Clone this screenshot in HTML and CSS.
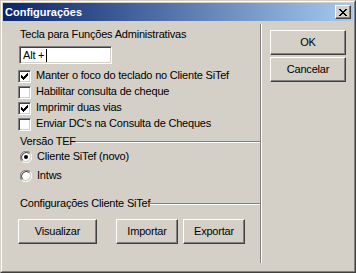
FILE: index.html
```
<!DOCTYPE html>
<html lang="pt">
<head>
<meta charset="utf-8">
<title>Configurações</title>
<link rel="stylesheet" href="styles.css">
</head>
<body>
<div class="window">
  <div class="frame">
    <div class="titlebar">
      <span class="title">Configurações</span>
      <span class="close">
        <svg width="8" height="7" viewBox="0 0 8 7" shape-rendering="crispEdges">
          <path d="M0 0h2v1h-2zM6 0h2v1h-2zM1 1h2v1h-2zM5 1h2v1h-2zM2 2h4v1h-4zM3 3h2v1h-2zM2 4h4v1h-4zM1 5h2v1h-2zM5 5h2v1h-2zM0 6h2v1h-2zM6 6h2v1h-2z" fill="#000"/>
        </svg>
      </span>
    </div>
    <div class="client">
      <div class="main">
        <div class="label">Tecla para Funções Administrativas</div>
        <div class="input">Alt +<span class="caret"></span></div>
        <div class="checks">
          <div class="check-row">
            <span class="checkbox"><svg class="checkmark" width="7" height="7" viewBox="0 0 7 7" shape-rendering="crispEdges"><path d="M6 0h1v1h-1zM5 1h2v1h-2zM0 2h1v1h-1zM4 2h3v1h-3zM0 3h2v1h-2zM3 3h3v1h-3zM0 4h5v1h-5zM1 5h3v1h-3zM2 6h1v1h-1z" fill="#000"/></svg></span>
            <span class="text">Manter o foco do teclado no Cliente SiTef</span>
          </div>
          <div class="check-row">
            <span class="checkbox"></span>
            <span class="text">Habilitar consulta de cheque</span>
          </div>
          <div class="check-row">
            <span class="checkbox"><svg class="checkmark" width="7" height="7" viewBox="0 0 7 7" shape-rendering="crispEdges"><path d="M6 0h1v1h-1zM5 1h2v1h-2zM0 2h1v1h-1zM4 2h3v1h-3zM0 3h2v1h-2zM3 3h3v1h-3zM0 4h5v1h-5zM1 5h3v1h-3zM2 6h1v1h-1z" fill="#000"/></svg></span>
            <span class="text">Imprimir duas vias</span>
          </div>
          <div class="check-row">
            <span class="checkbox"></span>
            <span class="text">Enviar DC's na Consulta de Cheques</span>
          </div>
        </div>
        <div class="group-title group-tef"><span class="gt-text">Versão TEF</span><span class="etch"></span></div>
        <div class="radios">
          <div class="radio-row">
            <svg class="radio" width="12" height="12" viewBox="0 0 12 12">
              <path d="M1.76 10.24A6 6 0 0 1 10.24 1.76" fill="none" stroke="#808080" stroke-width="1"/>
              <circle cx="6" cy="6" r="4.5" fill="#fff"/>
              <path d="M10.24 1.76A6 6 0 0 1 1.76 10.24" fill="none" stroke="#fff" stroke-width="1"/>
              <path d="M2.5 9.5A5 5 0 0 1 9.5 2.5" fill="none" stroke="#404040" stroke-width="1"/>
              <path d="M9.5 2.5A5 5 0 0 1 2.5 9.5" fill="none" stroke="#D4D0C8" stroke-width="1"/>
              <circle cx="6" cy="6" r="2" fill="#000"/>
            </svg>
            <span class="text">Cliente SiTef (novo)</span>
          </div>
          <div class="radio-row">
            <svg class="radio" width="12" height="12" viewBox="0 0 12 12">
              <path d="M1.76 10.24A6 6 0 0 1 10.24 1.76" fill="none" stroke="#808080" stroke-width="1"/>
              <circle cx="6" cy="6" r="4.5" fill="#fff"/>
              <path d="M10.24 1.76A6 6 0 0 1 1.76 10.24" fill="none" stroke="#fff" stroke-width="1"/>
              <path d="M2.5 9.5A5 5 0 0 1 9.5 2.5" fill="none" stroke="#404040" stroke-width="1"/>
              <path d="M9.5 2.5A5 5 0 0 1 2.5 9.5" fill="none" stroke="#D4D0C8" stroke-width="1"/>
            </svg>
            <span class="text">Intws</span>
          </div>
        </div>
        <div class="group-title group-cfg"><span class="gt-text">Configurações Cliente SiTef</span><span class="etch"></span></div>
        <div class="btn-row">
          <span class="btn btn-vis">Visualizar</span>
          <span class="btn btn-imp">Importar</span>
          <span class="btn btn-exp">Exportar</span>
        </div>
      </div>
      <div class="sep"></div>
      <div class="side">
        <span class="btn btn-side">OK</span>
        <span class="btn btn-side">Cancelar</span>
      </div>
    </div>
  </div>
</div>
</body>
</html>
```
FILE: styles.css
```
html, body {
  margin: 0;
  padding: 0;
  background: #D4D0C8;
}
body {
  font-family: "Liberation Sans", Arial, sans-serif;
  font-size: 11px;
  letter-spacing: -0.2px;
  color: #000;
}
.window {
  width: 356px;
  height: 273px;
  box-sizing: border-box;
  border: 1px solid;
  border-color: #D4D0C8 #404040 #404040 #D4D0C8;
  background: #D4D0C8;
}
.frame {
  height: 100%;
  box-sizing: border-box;
  border: 1px solid;
  border-color: #FFFFFF #808080 #808080 #FFFFFF;
  padding: 1px;
  display: flex;
  flex-direction: column;
}
.titlebar {
  height: 18px;
  flex: none;
  display: flex;
  align-items: center;
  background: linear-gradient(to right, #0A246A, #A6CAF0);
}
.title {
  color: #fff;
  font-weight: bold;
  font-size: 11px;
  letter-spacing: 0;
  line-height: 18px;
  padding-left: 2px;
  flex: 1;
}
.close {
  width: 16px;
  height: 14px;
  box-sizing: border-box;
  margin-right: 2px;
  border: 1px solid;
  border-color: #fff #404040 #404040 #fff;
  box-shadow: inset -1px -1px #808080, inset 1px 1px #D4D0C8;
  background: #D4D0C8;
  display: flex;
  align-items: center;
  justify-content: center;
}
.close svg { display: block; margin-left: -1px; }
.client {
  flex: 1;
  display: flex;
}
.main {
  width: 257px;
  flex: none;
  padding-left: 15px;
  box-sizing: border-box;
}
.label {
  margin-top: 7px;
  line-height: 13px;
  padding-left: 2px;
}
.input {
  margin-top: 5px;
  margin-left: 1px;
  width: 93px;
  height: 18px;
  box-sizing: border-box;
  border: 1px solid;
  border-color: #808080 #fff #fff #808080;
  box-shadow: inset 1px 1px #404040, inset -1px -1px #D4D0C8;
  background: #fff;
  padding-left: 3px;
  line-height: 16px;
  display: flex;
  align-items: center;
}
.caret {
  display: inline-block;
  width: 1px;
  height: 13px;
  background: #000;
  margin-left: 2px;
}
.checks {
  margin-top: 5px;
}
.check-row {
  height: 16px;
  display: flex;
  align-items: flex-start;
}
.checkbox {
  width: 13px;
  height: 13px;
  box-sizing: border-box;
  margin-top: 1px;
  border: 1px solid;
  border-color: #808080 #fff #fff #808080;
  box-shadow: inset 1px 1px #404040, inset -1px -1px #D4D0C8;
  background: #fff;
  flex: none;
}
.checkmark {
  display: block;
  margin: 2px 0 0 2px;
}
.check-row .text {
  line-height: 13px;
  margin-left: 5px;
}
.group-title {
  display: flex;
  align-items: flex-start;
  line-height: 13px;
  padding-left: 2px;
}
.group-tef { margin-top: 2px; }
.group-cfg { margin-top: 9px; }
.etch {
  flex: 1;
  height: 0;
  margin-top: 6px;
  border-top: 1px solid #808080;
  border-bottom: 1px solid #fff;
}
.radios {
  margin-top: 2px;
}
.radio-row {
  height: 19px;
  display: flex;
  align-items: flex-start;
  padding-left: 2px;
}
.radio {
  display: block;
  flex: none;
  margin-top: 1px;
}
.radio-row .text {
  line-height: 13px;
  margin-left: 5px;
}
.btn-row {
  margin-top: 9px;
  display: flex;
}
.btn {
  height: 25px;
  box-sizing: border-box;
  border: 1px solid;
  border-color: #fff #404040 #404040 #fff;
  box-shadow: inset -1px -1px #808080, inset 1px 1px #D4D0C8;
  background: #D4D0C8;
  display: flex;
  align-items: center;
  justify-content: center;
  line-height: 13px;
}
.btn-vis { width: 79px; }
.btn-imp { width: 62px; margin-left: 19px; }
.btn-exp { width: 62px; margin-left: 5px; }
.sep {
  width: 0;
  margin-top: 3px;
  height: 239px;
  border-left: 1px solid #808080;
  border-right: 1px solid #fff;
  flex: none;
}
.side {
  padding-left: 8px;
  padding-top: 9px;
  display: flex;
  flex-direction: column;
  gap: 2px;
}
.btn-side { width: 76px; }
```
